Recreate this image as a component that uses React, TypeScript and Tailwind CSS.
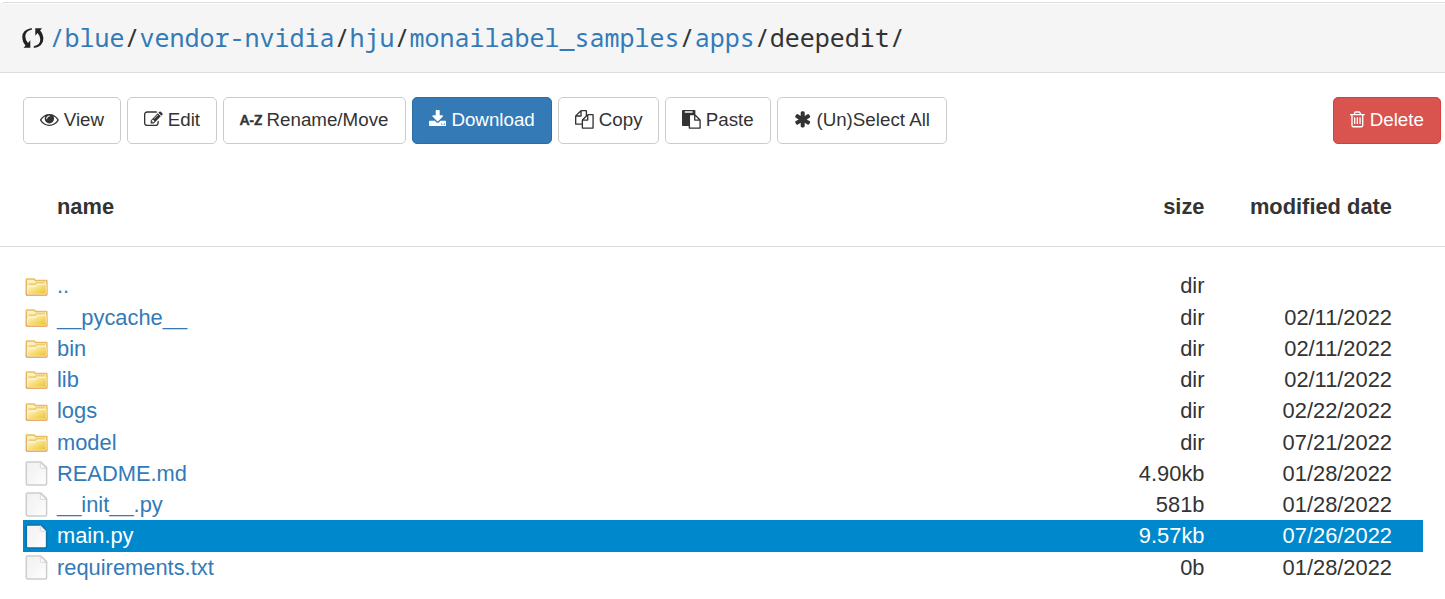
import React from "react";

const icons = {
  eye: {
    box: "0 0 1792 1792",
    d: "M1664 960q-152-236-381-353 61 104 61 225 0 185-131.5 316.5t-316.5 131.5-316.5-131.5-131.5-316.5q0-121 61-225-229 117-381 353 133 205 333.5 326.5t434.5 121.5 434.5-121.5 333.5-326.5zm-720-384q0-20-14-34t-34-14q-125 0-214.5 89.5t-89.5 214.5q0 20 14 34t34 14 34-14 14-34q0-86 61-147t147-61q20 0 34-14t14-34zm848 384q0 34-20 69-140 230-376.5 368.5t-499.5 138.5-499.5-139-376.5-368q-20-35-20-69t20-69q140-229 376.5-368t499.5-139 499.5 139 376.5 368q20 35 20 69z",
  },
  edit: {
    box: "0 0 1792 1792",
    d: "M888 1184l116-116-152-152-116 116v56h96v96h56zm440-720q-16-16-33 1l-350 350q-17 17-1 33t33-1l350-350q17-17 1-33zm80 594v190q0 119-84.5 203.5t-203.5 84.5h-832q-119 0-203.5-84.5t-84.5-203.5v-832q0-119 84.5-203.5t203.5-84.5h832q63 0 117 25 15 7 18 23 3 17-9 29l-49 49q-14 14-32 8-23-6-45-6h-832q-66 0-113 47t-47 113v832q0 66 47 113t113 47h832q66 0 113-47t47-113v-126q0-13 9-22l64-64q15-15 35-7t20 29zm-96-738l288 288-672 672h-288v-288zm444 132l-92 92-288-288 92-92q28-28 68-28t68 28l152 152q28 28 28 68t-28 68z",
  },
  download: {
    box: "64 0 1664 1792",
    d: "M1344 1344q0-26-19-45t-45-19-45 19-19 45 19 45 45 19 45-19 19-45zm256 0q0-26-19-45t-45-19-45 19-19 45 19 45 45 19 45-19 19-45zm128-224v320q0 40-28 68t-68 28h-1472q-40 0-68-28t-28-68v-320q0-40 28-68t68-28h465l135 136q58 56 136 56t136-56l136-136h464q40 0 68 28t28 68zm-325-569q17 41-14 70l-448 448q-18 19-45 19t-45-19l-448-448q-31-29-14-70 17-39 59-39h256v-448q0-26 19-45t45-19h256q26 0 45 19t19 45v448h256q42 0 59 39z",
  },
  copy: {
    box: "0 0 1792 1792",
    d: "M1696 384q40 0 68 28t28 68v1216q0 40-28 68t-68 28h-960q-40 0-68-28t-28-68v-288h-544q-40 0-68-28t-28-68v-672q0-40 20-88t48-76l408-408q28-28 76-48t88-20h416q40 0 68 28t28 68v328q68-40 128-40h416zm-544 213l-299 299h299v-299zm-640-384l-299 299h299v-299zm196 647l316-316v-416h-384v416q0 40-28 68t-68 28h-416v640h512v-256q0-40 20-88t48-76zm956 804v-1152h-384v416q0 40-28 68t-68 28h-416v640h896z",
  },
  paste: {
    box: "0 0 1792 1792",
    d: "M768 1664h896v-640h-416q-40 0-68-28t-28-68v-416h-384v1152zm256-1440v-64q0-13-9.5-22.5t-22.5-9.5h-704q-13 0-22.5 9.5t-9.5 22.5v64q0 13 9.5 22.5t22.5 9.5h704q13 0 22.5-9.5t9.5-22.5zm256 672h299l-299-299v299zm512 128v672q0 40-28 68t-68 28h-960q-40 0-68-28t-28-68v-160h-544q-40 0-68-28t-28-68v-1344q0-40 28-68t68-28h1088q40 0 68 28t28 68v328q21 13 36 28l408 408q28 28 48 76t20 88z",
  },
  asterisk: {
    box: "64 0 1664 1792",
    d: "M1546 1050q46 26 59.5 77.5t-12.5 97.5l-64 110q-26 46-77.5 59.5t-97.5-12.5l-266-153v307q0 52-38 90t-90 38h-128q-52 0-90-38t-38-90v-307l-266 153q-46 26-97.5 12.5t-77.5-59.5l-64-110q-26-46-12.5-97.5t59.5-77.5l266-154-266-154q-46-26-59.5-77.5t12.5-97.5l64-110q26-46 77.5-59.5t97.5 12.5l266 153v-307q0-52 38-90t90-38h128q52 0 90 38t38 90v307l266-153q46-26 97.5-12.5t77.5 59.5l64 110q26 46 12.5 97.5t-59.5 77.5l-266 154z",
  },
  trash: {
    box: "192 0 1408 1792",
    d: "M704 736v576q0 14-9 23t-23 9h-64q-14 0-23-9t-9-23v-576q0-14 9-23t23-9h64q14 0 23 9t9 23zm256 0v576q0 14-9 23t-23 9h-64q-14 0-23-9t-9-23v-576q0-14 9-23t23-9h64q14 0 23 9t9 23zm256 0v576q0 14-9 23t-23 9h-64q-14 0-23-9t-9-23v-576q0-14 9-23t23-9h64q14 0 23 9t9 23zm128 724v-948h-896v948q0 22 7 40.5t14.5 27 10.5 8.5h832q3 0 10.5-8.5t14.5-27 7-40.5zm-672-1076h448l-48-117q-7-9-17-11h-317q-10 2-17 11zm928 32v64q0 14-9 23t-23 9h-96v948q0 83-47 143.5t-113 60.5h-832q-66 0-113-58.5t-47-141.5v-952h-96q-14 0-23-9t-9-23v-64q0-14 9-23t23-9h309l70-167q15-37 54-63t79-26h320q40 0 79 26t54 63l70 167h309q14 0 23 9t9 23z",
  },
};

function Icon({ name }: { name: keyof typeof icons }) {
  return (
    <svg viewBox={icons[name].box} className="mb-[2px] h-[18.75px] w-auto shrink-0 fill-current">
      <path d={icons[name].d} />
    </svg>
  );
}

function Button({ className, icon, label }: { className: string; icon: React.ReactNode; label: string }) {
  return (
    <button
      className={`flex h-[47px] items-center gap-[5px] rounded-[5px] border pl-4 text-[18.75px] leading-[28px] whitespace-nowrap ${className}`}
    >
      {icon}
      <span className="mb-[2px]">{label}</span>
    </button>
  );
}

const plain = "border-[#ccc] bg-white text-[#333]";

const path = [
  { text: "/blue", link: true },
  { text: "vendor-nvidia", link: true },
  { text: "hju", link: true },
  { text: "monailabel_samples", link: true },
  { text: "apps", link: true },
  { text: "deepedit", link: false },
];

const files = [
  { name: "..", size: "dir", date: "" },
  { name: "__pycache__", size: "dir", date: "02/11/2022" },
  { name: "bin", size: "dir", date: "02/11/2022" },
  { name: "lib", size: "dir", date: "02/11/2022" },
  { name: "logs", size: "dir", date: "02/22/2022" },
  { name: "model", size: "dir", date: "07/21/2022" },
  { name: "README.md", size: "4.90kb", date: "01/28/2022" },
  { name: "__init__.py", size: "581b", date: "01/28/2022" },
  { name: "main.py", size: "9.57kb", date: "07/26/2022", selected: true },
  { name: "requirements.txt", size: "0b", date: "01/28/2022" },
];

function FolderIcon() {
  return (
    <svg viewBox="0 0 25 25" className="size-[25px]">
      <defs>
        <linearGradient id="folder" x1="0" y1="0" x2="0" y2="1">
          <stop offset="0" stopColor="#e9c163" />
          <stop offset="1" stopColor="#dd9350" />
        </linearGradient>
        <linearGradient id="front" x1="0" y1="0" x2="1" y2="1">
          <stop offset="0" stopColor="#fffae0" />
          <stop offset="0.5" stopColor="#f6dd7a" />
          <stop offset="1" stopColor="#ecc31c" />
        </linearGradient>
      </defs>
      <path d="M2.500 4.200h8l1.400 1.500h10.700q1 0 1 1v13.500q0 1.600-1.600 1.600H3.200q-1.600 0-1.600-1.600V5.200q0-1 .9-1z" fill="url(#folder)" />
      <path d="M3.100 5.700h6.600l1.500 1.600h11v12.400H3.100z" fill="#fcf0bd" />
      <path d="M4.600 9.300h6.200l1.300-1.500h8.800v1.800H13l-1.300 1.500H4.600z" fill="#ecd078" />
      <path d="M3.200 12.700h8.200l2-2.200h8.800v9.700H3.200z" fill="url(#front)" stroke="#fff6cf" strokeWidth="0.7" />
    </svg>
  );
}

function FileIcon({ selected }: { selected?: boolean }) {
  return (
    <svg viewBox="0 0 25 25" className="size-[25px]">
      <defs>
        <linearGradient id="page" x1="0" y1="0" x2="1" y2="1">
          <stop offset="0" stopColor="#f1f1f1" />
          <stop offset="0.5" stopColor="#f6f6f6" />
          <stop offset="1" stopColor="#ffffff" />
        </linearGradient>
      </defs>
      <path
        d="M3.300 .900h13.600l5.700 5.700v15.800q0 1.500-1.500 1.500H3.800q-1.500 0-1.500-1.500V1.900q0-1 1-1z"
        fill="url(#page)"
        stroke={selected ? "#0872a8" : "#cdcdcd"}
        strokeWidth="1.500"
      />
      <path d="M16.300 1.600v4.600q0 1.200 1.200 1.200h4.400z" fill="#fbfbfb" stroke="#d3d3d3" strokeWidth="0.900" />
    </svg>
  );
}

export default function App() {
  return (
    <div className="h-[599px] w-full overflow-hidden bg-white font-['Liberation_Sans',Arial,sans-serif] text-[21.875px] leading-[31.25px] text-[#333]">
      <div className="pt-[2px]">
        <header className="flex h-[71px] items-center rounded-tl-[5px] border-y border-[#ddd] bg-[#f5f5f5] pl-[21px] font-['Noto_Sans_Mono','DejaVu_Sans_Mono',monospace] text-[25px] shadow-[inset_0_1px_0_#fff]">
          <svg viewBox="0 0 24 24" className="mr-[4.5px] h-6 w-6 fill-[#222]">
            <path d="M10.800 2Q1.300 3.500 1.300 11q0 5 3.200 8.400L2.600 21.800H9.300V14.300L7 17Q4.300 14 4.300 10.500 4.300 5 10.800 3.800z" />
            <path d="M12.800 22Q22.300 20.500 22.300 13q0-5-3.200-8.400L21 2.200H14.300V9.700L16.600 7Q19.300 10 19.300 13.500 19.300 19 12.800 20.200z" />
          </svg>
          <h1>
            {path.map((part) => (
              <React.Fragment key={part.text}>
                <span className={part.link ? "text-[#337ab7]" : "text-[#333]"}>{part.text}</span>/
              </React.Fragment>
            ))}
          </h1>
        </header>
      </div>

      <div className="flex h-[71px] items-end justify-between pr-1 pl-[23px]">
        <div className="flex gap-[6px]">
          <Button className={`w-[98px] ${plain}`} icon={<Icon name="eye" />} label="View" />
          <Button className={`w-[90px] ${plain}`} icon={<Icon name="edit" />} label="Edit" />
          <Button
            className={`w-[183px] ${plain}`}
            icon={
              <span className="mb-[2px] w-[21.5px] font-['Lato',sans-serif] text-[13.2px] font-black [-webkit-text-stroke:0.4px_#333]">
                A-Z
              </span>
            }
            label="Rename/Move"
          />
          <Button className="w-[140px] border-[#2e6da4] bg-[#337ab7] text-white" icon={<Icon name="download" />} label="Download" />
          <Button className={`w-[101px] ${plain}`} icon={<Icon name="copy" />} label="Copy" />
          <Button className={`w-[106px] ${plain}`} icon={<Icon name="paste" />} label="Paste" />
          <Button className={`w-[170px] ${plain}`} icon={<Icon name="asterisk" />} label="(Un)Select All" />
        </div>
        <Button className="w-[108px] border-[#d43f3a] bg-[#d9534f] text-white" icon={<Icon name="trash" />} label="Delete" />
      </div>

      <div className="flex h-[103px] border-b border-[#ddd] pt-[47px] pl-[57px] font-bold">
        <div className="w-[948px]">name</div>
        <div className="w-[199.5px] text-right">size</div>
        <div className="w-[187.5px] text-right">modified date</div>
      </div>

      <ul className="pt-[23.4px] pl-[23px]">
        {files.map((f) => (
          <li key={f.name} className={`flex h-[31.25px] w-[1400px] items-center ${f.selected ? "bg-[#0088cc] text-white" : ""}`}>
            <div className="w-[34px] pl-[1px]">{f.size === "dir" ? <FolderIcon /> : <FileIcon selected={f.selected} />}</div>
            <div className={`w-[948px] ${f.selected ? "" : "text-[#337ab7]"}`}>{f.name}</div>
            <div className="w-[199.5px] text-right">{f.size}</div>
            <div className="w-[187.5px] text-right">{f.date}</div>
          </li>
        ))}
      </ul>
    </div>
  );
}
